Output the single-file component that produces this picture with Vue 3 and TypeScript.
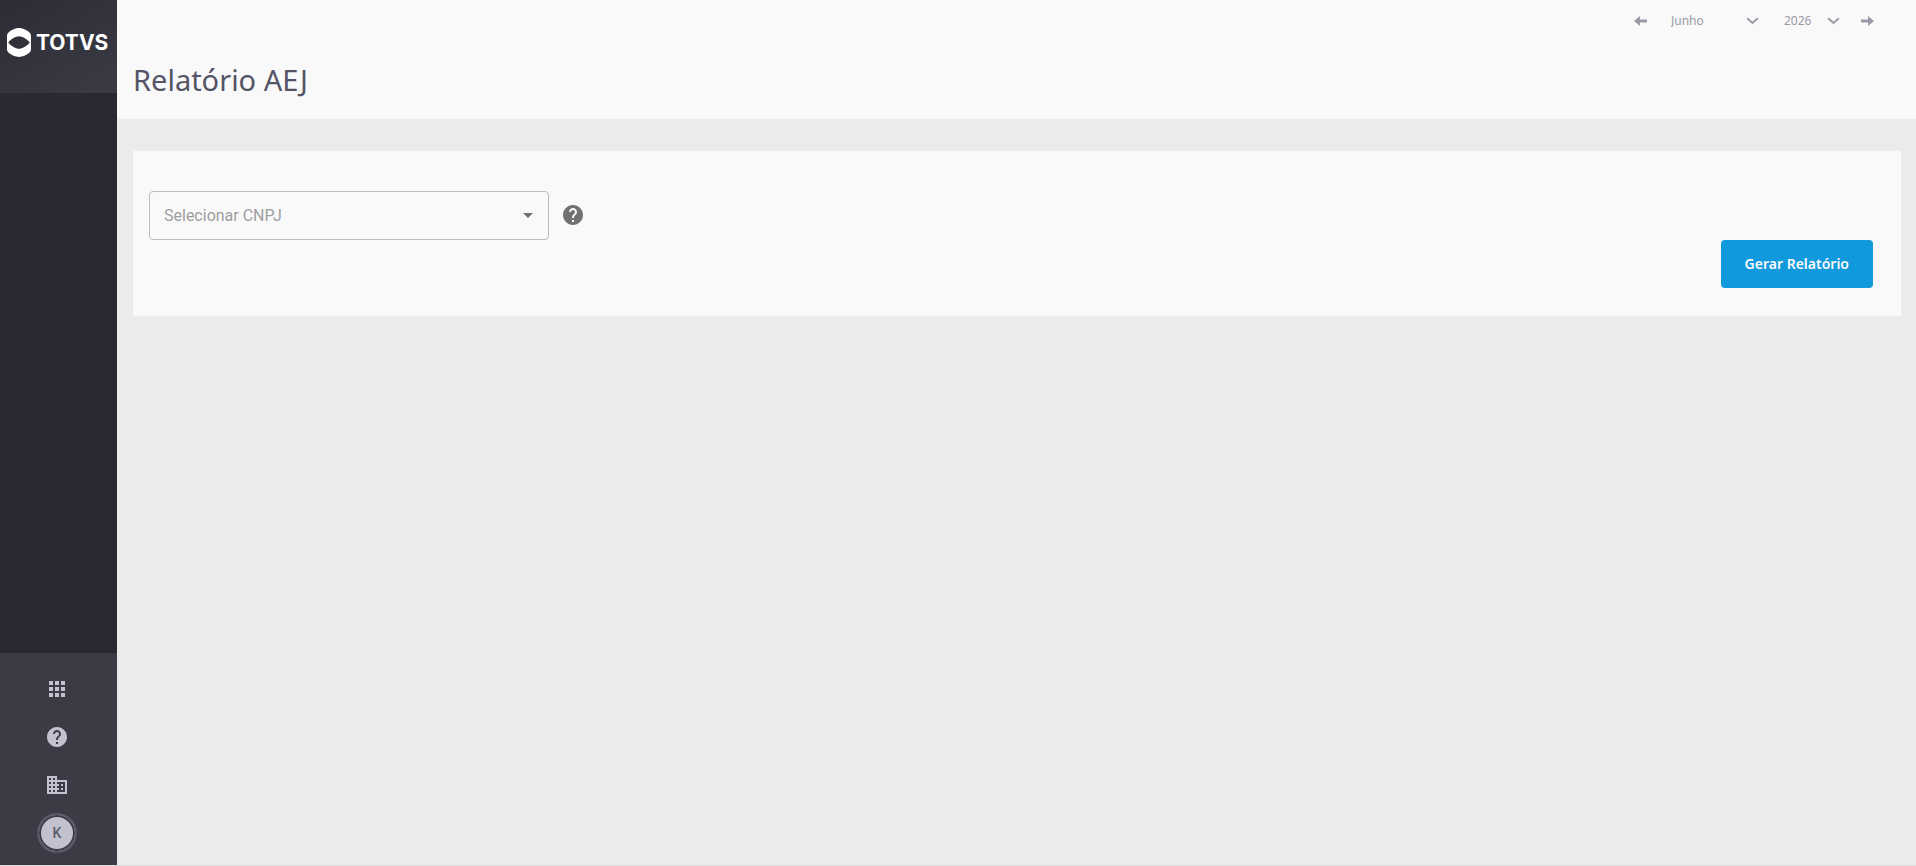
<script setup lang="ts">
import { ref } from 'vue'

const months: string[] = [
  'Janeiro', 'Fevereiro', 'Março', 'Abril', 'Maio', 'Junho',
  'Julho', 'Agosto', 'Setembro', 'Outubro', 'Novembro', 'Dezembro',
]
const years: number[] = [2024, 2025, 2026]
const month = ref<string>('Junho')
const year = ref<number>(2026)
const cnpj = ref<string>('')

function step(delta: number): void {
  const next = year.value * 12 + months.indexOf(month.value) + delta
  const nextYear = Math.floor(next / 12)
  if (!years.includes(nextYear)) return
  year.value = nextYear
  month.value = months[next % 12]
}
</script>

<template>
  <div class="layout">
    <aside class="sidebar">
      <div class="brand">
        <svg class="brand-mark" viewBox="0 0 24 29" aria-hidden="true">
          <path fill="#fff" fill-rule="evenodd" d="M12 0C15 0 20 2 22.300 4.200C23.500 5.400 24 6.500 24 8V21C24 22.500 23.500 23.600 22.300 24.800C20 27 15 29 12 29S4 27 1.700 24.800C.5 23.600 0 22.500 0 21V8C0 6.500.5 5.400 1.700 4.200C4 2 9 0 12 0ZM1.200 14.500C4 18 9 20.800 12 20.800S20 18 22.800 14.500C20 11 15 8.200 12 8.200S4 11 1.200 14.500Z" />
        </svg>
        <span class="brand-name">TOTVS</span>
      </div>
      <nav class="menu" aria-label="Menu principal"></nav>
      <div class="tools">
        <button class="tool" type="button" aria-label="Aplicativos">
          <svg viewBox="0 0 24 24"><path d="M4 8h4V4H4v4zm6 12h4v-4h-4v4zm-6 0h4v-4H4v4zm0-6h4v-4H4v4zm6 0h4v-4h-4v4zm6-10v4h4V4h-4zm-6 4h4V4h-4v4zm6 6h4v-4h-4v4zm0 6h4v-4h-4v4z" /></svg>
        </button>
        <button class="tool" type="button" aria-label="Ajuda">
          <svg viewBox="0 0 24 24"><path d="M12 2C6.480 2 2 6.480 2 12s4.480 10 10 10 10-4.480 10-10S17.520 2 12 2zm1 17h-2v-2h2v2zm2.070-7.750l-.9.920C13.450 12.900 13 13.500 13 15h-2v-.5c0-1.100.45-2.100 1.170-2.830l1.240-1.260c.37-.36.59-.86.59-1.410 0-1.100-.9-2-2-2s-2 .9-2 2H8c0-2.210 1.790-4 4-4s4 1.790 4 4c0 .88-.36 1.680-.93 2.250z" /></svg>
        </button>
        <button class="tool" type="button" aria-label="Empresa">
          <svg viewBox="0 0 24 24"><path d="M12 7V3H2v18h20V7H12zM6 19H4v-2h2v2zm0-4H4v-2h2v2zm0-4H4V9h2v2zm0-4H4V5h2v2zm4 12H8v-2h2v2zm0-4H8v-2h2v2zm0-4H8V9h2v2zm0-4H8V5h2v2zm10 12h-8v-2h2v-2h-2v-2h2v-2h-2V9h8v10zm-2-8h-2v2h2v-2zm0 4h-2v2h2v-2z" /></svg>
        </button>
        <button class="avatar" type="button" aria-label="Perfil K">K</button>
      </div>
    </aside>

    <div class="content">
      <header class="header">
        <div class="period">
          <button class="arrow" type="button" aria-label="Mês anterior" @click="step(-1)">
            <svg viewBox="0 0 13 10"><path d="M0 5L6 0V3.500H13V6.500H6V10Z" /></svg>
          </button>
          <label class="picker picker-month">
            <select v-model="month" aria-label="Mês">
              <option v-for="m in months" :key="m" :value="m">{{ m }}</option>
            </select>
            <svg class="chevron" viewBox="0 0 13 8" aria-hidden="true"><path d="M1.200 1.200L6.500 6L11.800 1.200" /></svg>
          </label>
          <label class="picker picker-year">
            <select v-model="year" aria-label="Ano">
              <option v-for="y in years" :key="y" :value="y">{{ y }}</option>
            </select>
            <svg class="chevron" viewBox="0 0 13 8" aria-hidden="true"><path d="M1.200 1.200L6.500 6L11.800 1.200" /></svg>
          </label>
          <button class="arrow" type="button" aria-label="Próximo mês" @click="step(1)">
            <svg viewBox="0 0 13 10"><path d="M13 5L7 0V3.500H0V6.500H7V10Z" /></svg>
          </button>
        </div>
        <h1 class="title">Relatório AEJ</h1>
      </header>

      <main class="main">
        <form class="card" @submit.prevent>
          <div class="field-row">
            <label class="field">
              <select v-model="cnpj" aria-label="Selecionar CNPJ">
                <option value="" disabled>Selecionar CNPJ</option>
              </select>
              <svg class="caret" viewBox="0 0 10 5" aria-hidden="true"><path d="M0 0L5 5L10 0Z" /></svg>
            </label>
            <button class="help" type="button" aria-label="Ajuda sobre o CNPJ">
              <svg viewBox="0 0 24 24"><path d="M12 2C6.480 2 2 6.480 2 12s4.480 10 10 10 10-4.480 10-10S17.520 2 12 2zm1 17h-2v-2h2v2zm2.070-7.750l-.9.920C13.450 12.900 13 13.500 13 15h-2v-.5c0-1.100.45-2.100 1.170-2.830l1.240-1.260c.37-.36.59-.86.59-1.410 0-1.100-.9-2-2-2s-2 .9-2 2H8c0-2.210 1.790-4 4-4s4 1.790 4 4c0 .88-.36 1.680-.93 2.250z" /></svg>
            </button>
          </div>
          <div class="actions">
            <button class="submit" type="submit">Gerar Relatório</button>
          </div>
        </form>
      </main>
    </div>
  </div>
</template>

<style>
body {
  margin: 0;
}
</style>

<style scoped>
.layout {
  display: flex;
  box-sizing: border-box;
  min-height: 100vh;
  border-bottom: 1px solid #dddddf;
  background: #ebebed;
  font-family: "Noto Sans", "Open Sans", sans-serif;
}

button,
select {
  margin: 0;
  padding: 0;
  border: 0;
  background: none;
  color: inherit;
  font: inherit;
  cursor: pointer;
}

svg {
  display: block;
}

.sidebar {
  display: flex;
  flex: none;
  flex-direction: column;
  width: 117px;
  overflow: hidden;
  background: #292931;
}

.brand {
  display: flex;
  align-items: center;
  gap: 5px;
  box-sizing: border-box;
  height: 93px;
  padding: 0 0 8px 7px;
  background: linear-gradient(150deg, #2c2c35, #3b3b45);
}

.brand-mark {
  flex: none;
  width: 24px;
  height: 29px;
}

.brand-name {
  color: #fff;
  font-family: Inter, sans-serif;
  font-size: 21px;
  font-weight: 700;
  line-height: 24px;
}

.menu {
  flex: 1;
}

.tools {
  display: flex;
  flex-direction: column;
  align-items: center;
  gap: 24px;
  padding: 24px 3px 12px 0;
  background: #3b3b45;
  box-shadow: 0 -1px 4px #24242c;
  color: #c2c1cf;
}

.tool {
  width: 24px;
  height: 24px;
}

.tool svg,
.help svg {
  width: 24px;
  height: 24px;
  fill: currentColor;
}

.avatar {
  box-sizing: border-box;
  width: 40px;
  height: 40px;
  margin-top: -8px;
  border: 2px solid #575567;
  border-radius: 50%;
  background: #c2c1cf;
  box-shadow: inset 0 0 0 2px #3b3b45;
  color: #5c5b68;
  font-family: Roboto, sans-serif;
  font-size: 14px;
  font-weight: 500;
}

.content {
  flex: 1;
  min-width: 0;
}

.header {
  display: flex;
  flex-direction: column;
  gap: 23px;
  padding: 8px 42px 15px 16px;
  background: #f9f9f9;
}

.period {
  display: flex;
  align-items: center;
  justify-content: flex-end;
  height: 25px;
  color: #9c9aa8;
}

.arrow svg {
  width: 13px;
  height: 10px;
  fill: currentColor;
}

.picker {
  display: flex;
  align-items: center;
  font-size: 12px;
}

.picker select,
.field select {
  flex: 1;
  min-width: 0;
  appearance: none;
}

.picker-month {
  width: 88px;
  margin: 0 25px 0 24px;
}

.picker-year {
  width: 56px;
  margin-right: 21px;
}

.chevron {
  width: 13px;
  height: 8px;
  fill: none;
  stroke: currentColor;
  stroke-width: 2;
}

.title {
  margin: 0;
  color: #555466;
  font-size: 29px;
  font-weight: 400;
  line-height: 48px;
}

.main {
  padding: 32px 15px 32px 16px;
}

.card {
  padding: 40px 28px 28px 16px;
  background: #f9f9f9;
}

.field-row {
  display: flex;
  align-items: center;
  gap: 12px;
}

.field {
  display: flex;
  align-items: center;
  box-sizing: border-box;
  width: 400px;
  height: 49px;
  padding: 0 15px 0 14px;
  border: 1px solid #bcbcbd;
  border-radius: 4px;
  color: #9e9ea0;
  font-family: Roboto, sans-serif;
  font-size: 16px;
}

.caret {
  width: 10px;
  height: 5px;
  fill: #717073;
}

.help {
  padding-bottom: 1px;
  color: #717073;
}

.actions {
  display: flex;
  justify-content: flex-end;
}

.submit {
  height: 48px;
  padding: 0 24px 2px;
  border-radius: 4px;
  background: #1199de;
  color: #f9f9f9;
  font-size: 14px;
  font-weight: 600;
}
</style>
